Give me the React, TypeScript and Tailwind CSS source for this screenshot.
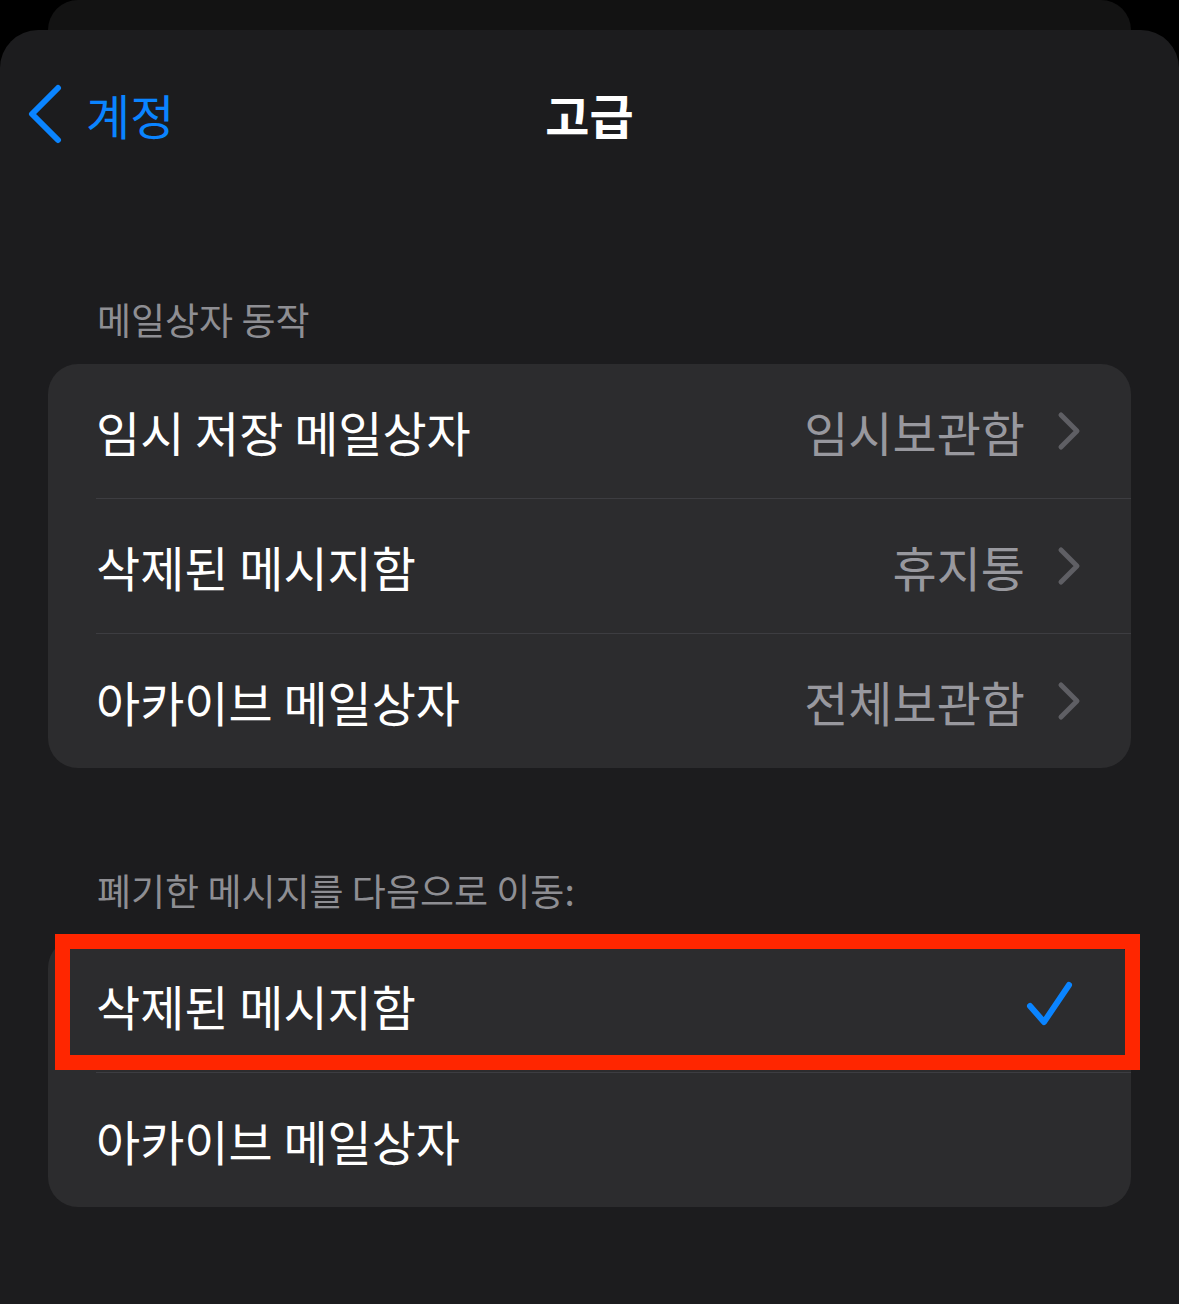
import React from "react";

const font = {
  fontFamily: '"Noto Sans CJK KR", "Noto Sans", sans-serif',
};

function Chevron() {
  return (
    <svg width="24" height="40" viewBox="0 0 24 40" className="ml-[32px]">
      <path
        d="M4 4 L20 20 L4 36"
        fill="none"
        stroke="#5f5f64"
        strokeWidth="5"
        strokeLinecap="round"
        strokeLinejoin="round"
      />
    </svg>
  );
}

interface RowProps {
  label: string;
  value?: string;
  checked?: boolean;
  divider?: boolean;
}

function Row({ label, value, checked, divider }: RowProps) {
  return (
    <div>
      <div className="flex h-[134px] items-center pl-[48px] pr-[50px]">
        <span className="flex-1 text-[48px] leading-[56px] text-white">{label}</span>
        {value && (
          <>
            <span className="text-[48px] leading-[56px] text-[#98989e]">{value}</span>
            <Chevron />
          </>
        )}
        {checked && (
          <svg width="50" height="50" viewBox="0 0 50 50" className="mr-[6px]">
            <path
              d="M5 26 L19 42 L44 5"
              fill="none"
              stroke="#0a84ff"
              strokeWidth="6"
              strokeLinecap="round"
              strokeLinejoin="round"
            />
          </svg>
        )}
      </div>
      {divider && <div className="ml-[48px] h-px bg-[#3d3d41]" />}
    </div>
  );
}

export default function App() {
  return (
    <div className="flex h-[1304px] w-[1179px] flex-col overflow-hidden bg-black" style={font}>
      <div className="mx-[48px] h-[30px] shrink-0 rounded-t-[30px] bg-[#131313]" />
      <div className="flex-1 rounded-t-[38px] bg-[#1c1c1e] pt-[55px]">
        <div className="relative flex h-[58px] items-center">
          <div className="flex items-center pl-[26px]">
            <svg width="38" height="60" viewBox="0 0 38 60">
              <path
                d="M32 4 L6 30 L32 56"
                fill="none"
                stroke="#0a84ff"
                strokeWidth="6"
                strokeLinecap="round"
                strokeLinejoin="round"
              />
            </svg>
            <span className="ml-[22px] text-[48px] leading-[56px] text-[#0a84ff]">계정</span>
          </div>
          <span className="absolute left-1/2 -translate-x-1/2 text-[48px] font-bold leading-[56px] text-white">
            고급
          </span>
        </div>

        <div className="mt-[156px] px-[97px] text-[37px] leading-[40px] text-[#8e8e93]">
          메일상자 동작
        </div>
        <div className="mx-[48px] mt-[25px] overflow-hidden rounded-[30px] bg-[#2c2c2e]">
          <Row label="임시 저장 메일상자" value="임시보관함" divider />
          <Row label="삭제된 메시지함" value="휴지통" divider />
          <Row label="아카이브 메일상자" value="전체보관함" />
        </div>

        <div className="mt-[102px] px-[97px] text-[37px] leading-[40px] text-[#8e8e93]">
          폐기한 메시지를 다음으로 이동:
        </div>
        <div className="relative mx-[48px] mt-[28px] rounded-[30px] bg-[#2c2c2e]">
          <Row label="삭제된 메시지함" checked divider />
          <Row label="아카이브 메일상자" />
          <div className="pointer-events-none absolute left-[7px] top-[-4px] h-[136px] w-[1085px] border-[15px] border-[#ff2600]" />
        </div>
      </div>
    </div>
  );
}
